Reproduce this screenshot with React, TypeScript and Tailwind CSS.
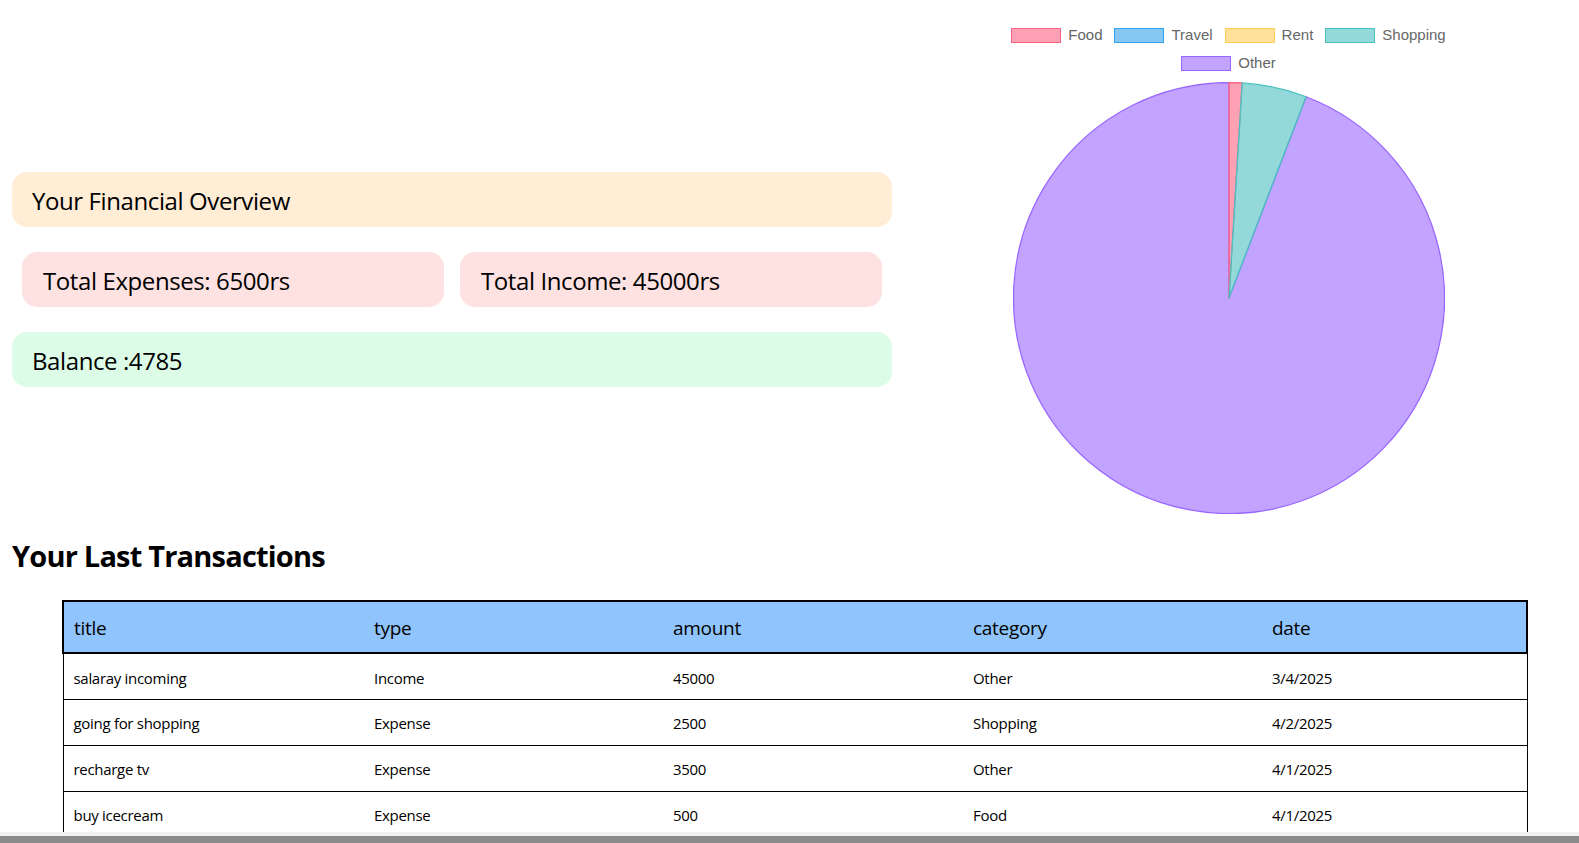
import React from "react"

const rows = [
  { title: "salaray incoming", type: "Income", amount: 45000, category: "Other", date: "3/4/2025" },
  { title: "going for shopping", type: "Expense", amount: 2500, category: "Shopping", date: "4/2/2025" },
  { title: "recharge tv", type: "Expense", amount: 3500, category: "Other", date: "4/1/2025" },
  { title: "buy icecream", type: "Expense", amount: 500, category: "Food", date: "4/1/2025" },
]

const legend = [
  { label: "Food", fill: "bg-[#ffa1b5]", border: "border-[#ff6384]" },
  { label: "Travel", fill: "bg-[#86c7f3]", border: "border-[#36a2eb]" },
  { label: "Rent", fill: "bg-[#ffe19a]", border: "border-[#ffcd56]" },
  { label: "Shopping", fill: "bg-[#93d9d9]", border: "border-[#4bc0c0]" },
]

function LegendItem({ label, fill, border }: { label: string; fill: string; border: string }) {
  return (
    <div className="flex items-center mx-[6px]">
      <span className={`w-[50px] h-[15px] border-[1.5px] ${fill} ${border}`} />
      <span className="ml-[7px] text-[15px] text-[#666]" style={{ fontFamily: '"Liberation Sans", Arial, sans-serif' }}>
        {label}
      </span>
    </div>
  )
}

function Pie() {
  return (
    <svg width="432" height="432" viewBox="0 0 432 432" className="mx-auto">
      <path
        d="M216,216 L293.12,14.77 A215.5,215.5 0 1 1 216,0.5 Z"
        fill="rgba(153,102,255,0.6)"
        stroke="#9966ff"
        strokeWidth="1.25"
        strokeLinejoin="round"
      />
      <path
        d="M216,216 L216,0.5 A215.5,215.5 0 0 1 229.14,0.9 Z"
        fill="rgba(255,99,132,0.6)"
        stroke="#ff6384"
        strokeWidth="1.25"
        strokeLinejoin="round"
      />
      <path
        d="M216,216 L229.14,0.9 A215.5,215.5 0 0 1 293.12,14.77 Z"
        fill="rgba(75,192,192,0.6)"
        stroke="#4bc0c0"
        strokeWidth="1.25"
        strokeLinejoin="round"
      />
    </svg>
  )
}

export default function App() {
  return (
    <div
      className="min-h-screen bg-white text-black pl-[12px] pr-[14px]"
      style={{ fontFamily: '"Open Sans", "Noto Sans", sans-serif' }}
    >
      <div className="flex">
        <div className="w-[880px] pt-[172px] text-[24px] tracking-[-0.4px]">
          <div className="h-[55px] rounded-[15px] bg-[#ffedd5] pl-[20px] pt-[2px] flex items-center">
            Your Financial Overview
          </div>

          <div className="mt-[25px] px-[10px] flex gap-4">
            <div className="flex-1 h-[55px] rounded-[15px] bg-[#fee2e2] pl-[21px] pt-[2px] flex items-center">
              Total Expenses: 6500rs
            </div>
            <div className="flex-1 h-[55px] rounded-[15px] bg-[#fee2e2] pl-[21px] pt-[2px] flex items-center">
              Total Income: 45000rs
            </div>
          </div>

          <div className="mt-[25px] h-[55px] rounded-[15px] bg-[#dcfce7] pl-[20px] pt-[2px] flex items-center">
            Balance :4785
          </div>
        </div>

        <div className="flex-1 pt-[21px]">
          <div className="h-[28px] flex justify-center items-center">
            {legend.map((l) => (
              <LegendItem key={l.label} {...l} />
            ))}
          </div>
          <div className="h-[28px] flex justify-center items-center">
            <LegendItem label="Other" fill="bg-[#c2a3ff]" border="border-[#9966ff]" />
          </div>
          <div className="mt-[5px]">
            <Pie />
          </div>
        </div>
      </div>

      <h2 className="mt-[24px] text-[29px] leading-[36px] font-bold tracking-[-0.8px]">Your Last Transactions</h2>

      <table className="mt-[26px] ml-[50px] w-[1466px] border-collapse table-fixed text-left">
        <colgroup>
          <col className="w-[301px]" />
          <col className="w-[299px]" />
          <col className="w-[300px]" />
          <col className="w-[299px]" />
          <col />
        </colgroup>
        <thead>
          <tr className="bg-[#90c4fc] border-2 border-black">
            {["title", "type", "amount", "category", "date"].map((h) => (
              <th key={h} className="h-[52px] px-[10px] pt-[2px] font-normal text-[19px] tracking-[-0.3px]">
                {h}
              </th>
            ))}
          </tr>
        </thead>
        <tbody>
          {rows.map((r) => (
            <tr key={r.title} className="border border-black text-[15px] tracking-[-0.3px]">
              <td className="h-[46px] px-[10px] pt-[3px]">{r.title}</td>
              <td className="h-[46px] px-[10px] pt-[3px]">{r.type}</td>
              <td className="h-[46px] px-[10px] pt-[3px]">{r.amount}</td>
              <td className="h-[46px] px-[10px] pt-[3px]">{r.category}</td>
              <td className="h-[46px] px-[10px] pt-[3px]">{r.date}</td>
            </tr>
          ))}
        </tbody>
      </table>
      <div className="h-[40px]" />

      <div className="fixed inset-x-0 bottom-0 h-[11px] bg-[#f1f1f1] flex items-end">
        <div className="h-[7px] w-full bg-[#8b8b8b]" />
      </div>
    </div>
  )
}
